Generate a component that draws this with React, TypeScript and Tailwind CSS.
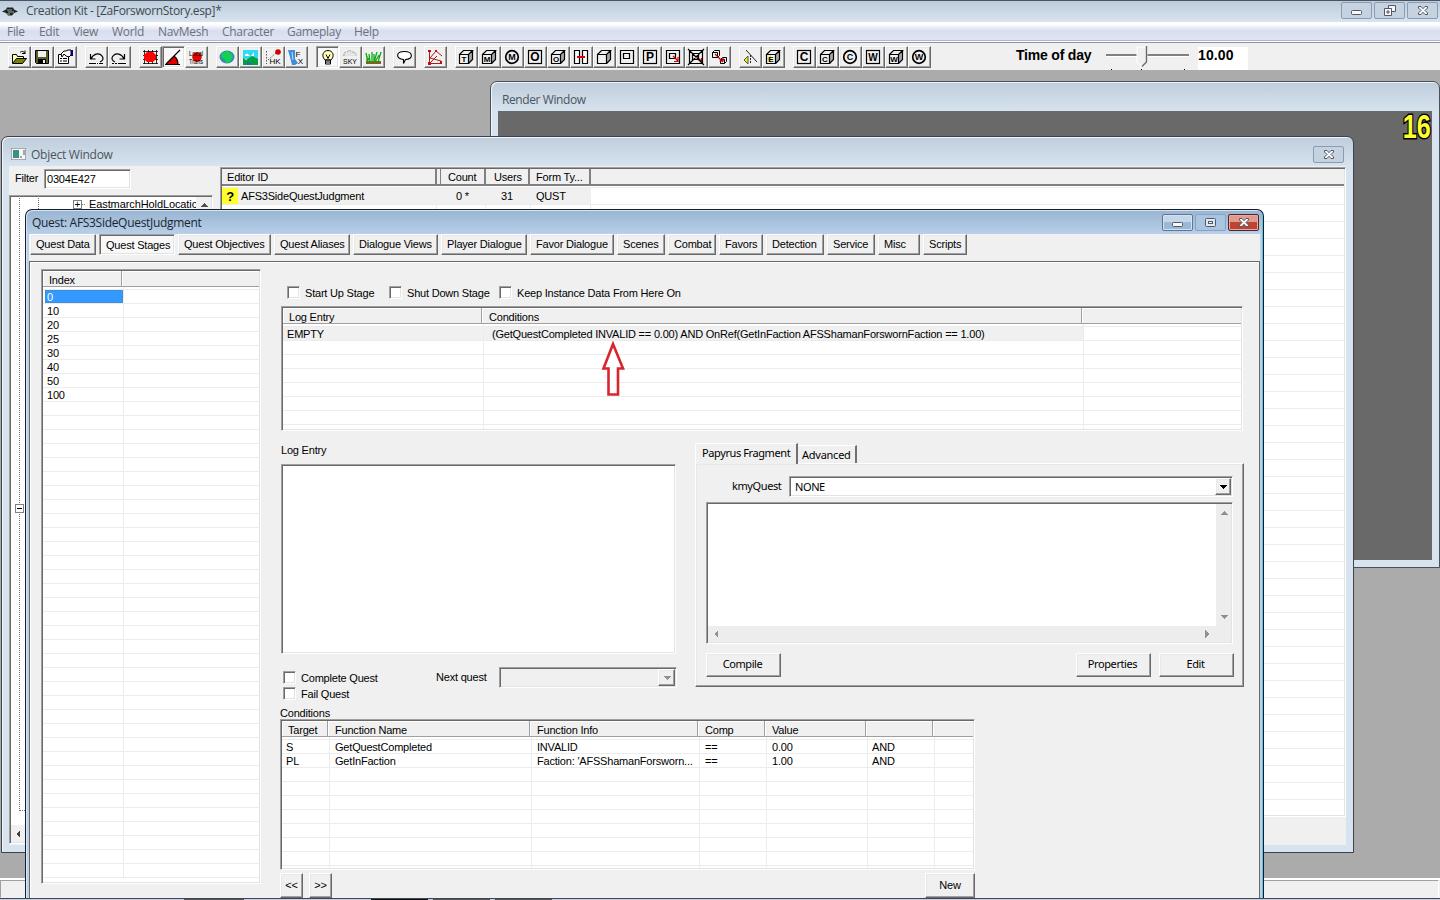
import React from 'react';
import clsx from 'clsx';

const sunken =
    'border border-t-[#a0a0a0] border-l-[#a0a0a0] border-r-white border-b-white p-px shadow-[inset_1px_1px_#696969,inset_-1px_-1px_#e3e3e3]';
const raised =
    'border border-t-white border-l-white border-r-[#696969] border-b-[#696969] bg-[#f0f0f0] shadow-[inset_-1px_-1px_#a0a0a0,inset_1px_1px_#e8e8e8]';
const segoe = 'font-["Open_Sans",sans-serif] text-[12px]';
const tahoma = 'font-["Noto_Sans",sans-serif] text-[11px] tracking-[-0.4px]';

/* ---------- toolbar icons ---------- */

function Cube({ letter }: { letter?: string }) {
    return (
        <>
            <path d="M11 5l4-4v9l-4 5z" fill="#a8a8a8" />
            <path d="M1.5 5.5h9v9h-9zM1.5 5.5l4-4h9l-4 4M14.5 1.5v9l-4 4" fill="none" stroke="#000" strokeWidth="1.2" />
            {letter && (
                <text x="6" y="13" textAnchor="middle" fontSize="8" fontWeight="bold" fontFamily="Liberation Sans" letterSpacing="0">
                    {letter}
                </text>
            )}
        </>
    );
}

function Boxed({ letter }: { letter: string }) {
    return (
        <>
            <rect x="1.5" y="1.5" width="13" height="13" fill="none" stroke="#000" strokeWidth="1.2" />
            <text x="8" y="12.2" textAnchor="middle" fontSize={letter === 'W' ? 10 : 12} fontWeight="bold" fontFamily="Liberation Sans" letterSpacing="0">
                {letter}
            </text>
        </>
    );
}

function Round({ letter }: { letter: string }) {
    return (
        <>
            <circle cx="8" cy="8" r="6.3" fill="none" stroke="#000" strokeWidth="1.7" />
            <text x="8" y="11.2" textAnchor="middle" fontSize="9" fontWeight="bold" fontFamily="Liberation Sans" letterSpacing="0">
                {letter}
            </text>
        </>
    );
}

const toolGroups: { icon: React.ReactNode; on?: boolean }[][] = [
    [
        {
            icon: (
                <>
                    <path d="M1.5 14V5.500h4l1 2h6v2" fill="#ffffb0" stroke="#000" />
                    <path d="M1.500 14.500l4-5h10l-4 5z" fill="#808000" stroke="#000" />
                    <path d="M9 3.500c2-2 4-1 5 1m0-3v3h-3" fill="none" stroke="#000" />
                </>
            ),
        },
        {
            icon: (
                <>
                    <path d="M1.5 1.5h13v13h-12l-1-1z" fill="#5c5c2c" stroke="#000" />
                    <path d="M4 2h8v6H4z" fill="#f0f0f0" />
                    <path d="M4 10h8v4H4z" fill="#000" />
                    <path d="M9 11h2v3H9z" fill="#f0f0f0" />
                </>
            ),
        },
        {
            icon: (
                <>
                    <path d="M1.5 5.5h10v9h-10z" fill="#fff" stroke="#000" />
                    <path d="M3 9.5h2m1 0h4M3 12h2m1 0h4" stroke="#000" />
                    <path d="M4 5l3-3h2l2-1h3v5l-2 2-3-1-2-2-2 3z" fill="#fff" stroke="#000" />
                    <path d="M14 1h2v6h-2z" fill="#000080" />
                </>
            ),
        },
    ],
    [
        {
            icon: (
                <path d="M2.5 5v5h5M3 10c2-5 8-7 11-3 2 2 1 5-2 6M1 14.5h7m1 0h1m1 0h4" fill="none" stroke="#000" strokeWidth="1.2" />
            ),
        },
        {
            icon: (
                <path d="M13.5 5v5h-5M13 10c-2-5-8-7-11-3-2 2-1 5 2 6M1 14.5h2m1 0h2m1 0h8" fill="none" stroke="#000" strokeWidth="1.2" />
            ),
        },
    ],
    [
        {
            icon: (
                <>
                    <path d="M2.5 1v14M6.5 1v14M10.5 1v14M14.5 1v14M1 2.5h15M1 6.5h15M1 10.5h15M1 14.5h15" stroke="#000" strokeWidth="0.8" />
                    <path d="M5 3h6l3 3v4l-3 3H5l-3-3V6z" fill="#f00" />
                </>
            ),
        },
        {
            on: true,
            icon: (
                <>
                    <path d="M1 15L9 7l3 3 1 5z" fill="#e00000" />
                    <path d="M0 15.5h15M1 15L15 1M9 7q4 3 4 8" fill="none" stroke="#000" strokeWidth="1.2" />
                </>
            ),
        },
        {
            icon: (
                <>
                    <circle cx="9" cy="8" r="4.800" fill="#e80000" />
                    <text x="1" y="7" textLength="14" lengthAdjust="spacingAndGlyphs" fontSize="7" fontFamily="Liberation Sans" letterSpacing="0">
                        Local
                    </text>
                    <text x="1" y="14.500" textLength="14" lengthAdjust="spacingAndGlyphs" fontSize="7" fontFamily="Liberation Sans" letterSpacing="0">
                        Trans
                    </text>
                </>
            ),
        },
    ],
    [
        {
            icon: (
                <>
                    <ellipse cx="8" cy="8" rx="7.500" ry="6.500" fill="#3a86b8" />
                    <path d="M3 4l5-2 4 2 2 4-3 5-4 1-1-3-4-3z" fill="#14d050" />
                </>
            ),
        },
        {
            icon: (
                <>
                    <path d="M1 1h15v9H1z" fill="#30d8f8" />
                    <path d="M3 6q2-3 4 0t5-3v4H3z" fill="#fff" />
                    <path d="M1 9l3 2 6-4 6 3v6H1z" fill="#00a040" />
                    <path d="M5 13l4 1v2H5z" fill="#3060c0" />
                </>
            ),
        },
        {
            icon: (
                <>
                    <path d="M1.5 2v13M3 11l8-7" stroke="#555" strokeDasharray="1.5 1.5" fill="none" />
                    <circle cx="13" cy="3" r="2.8" fill="#d00000" />
                    <text x="10" y="15" textAnchor="middle" fontSize="8" fontFamily="Liberation Sans" letterSpacing="0">
                        HK
                    </text>
                </>
            ),
        },
        {
            icon: (
                <>
                    <path d="M0 1h7v9l3 4-3 2H4L2 8z" fill="#3c8ce0" />
                    <path d="M4 3l1 8" stroke="#b8e0ff" />
                    <text x="10" y="8" textAnchor="middle" fontSize="8" fontFamily="Liberation Sans" letterSpacing="0">
                        F
                    </text>
                    <text x="12.500" y="14.500" textAnchor="middle" fontSize="8" fontFamily="Liberation Sans" letterSpacing="0">
                        X
                    </text>
                </>
            ),
        },
    ],
    [
        {
            on: true,
            icon: (
                <>
                    <path d="M6 11C2 7 4 1.500 9 1.500S16 7 12 11z" fill="#ffffb8" stroke="#000" />
                    <path d="M6.500 11h5v4h-5zM6.500 13h5M7 5.500l2 4 2-4" stroke="#000" fill="none" />
                </>
            ),
        },
        {
            icon: (
                <>
                    <path d="M2 7q-1-4 3-4 2-3 5 0 5 0 4 4" fill="#e4e4e4" stroke="#999" strokeDasharray="2 1" />
                    <text x="1" y="15" textLength="14" lengthAdjust="spacingAndGlyphs" fontSize="7" fontFamily="Liberation Sans" letterSpacing="0">
                        SKY
                    </text>
                </>
            ),
        },
        {
            icon: (
                <>
                    <path d="M1 12h15v3H1z" fill="#806020" />
                    <path d="M3 13L1 4m4 9L4 5m3 8V3m2 10l3-10m-2 10l4-7m-1 7l3-10M6 13L3 9m-1 3V7m7 5V5" stroke="#10a818" strokeWidth="1.300" fill="none" />
                </>
            ),
        },
    ],
    [
        {
            icon: <path d="M8.500 2.500c9 0 9 8 1 8l-2 4v-4c-8-.5-8-8 1-8z" fill="#fff" stroke="#000" strokeWidth="1.100" />,
        },
    ],
    [
        {
            icon: (
                <>
                    <path d="M2.500 2v12.500H15M3 9l6-7 6 5M3 9l11 3M3 14l7-7" fill="none" stroke="#b01818" />
                    <path d="M1 13h3v3H1zM1 1h3v2H1zM8 1h2v2H8zM13 12h2v2h-2z" fill="#b81010" />
                </>
            ),
        },
    ],
    [
        { icon: <Cube letter="T" /> },
        { icon: <Cube letter="M" /> },
        { icon: <Round letter="M" /> },
        { icon: <Boxed letter="O" /> },
        { icon: <Cube letter="O" /> },
        {
            icon: (
                <>
                    <path d="M1.500 1.500h5v13h-5zM9.500 1.500h5v13h-5z" fill="#fff" stroke="#000" strokeWidth="1.200" />
                    <path d="M4 8h8" stroke="#e00000" strokeWidth="2" />
                </>
            ),
        },
        { icon: <Cube /> },
        {
            icon: <path d="M1.500 1.500h13v13h-13zM4.500 4.500h6v5h-6z" fill="none" stroke="#000" strokeWidth="1.200" />,
        },
        { icon: <Boxed letter="P" /> },
        {
            icon: (
                <>
                    <path d="M1.500 1.500h13v13h-13zM4.500 4.500h6v5h-6z" fill="none" stroke="#000" strokeWidth="1.200" />
                    <path d="M8 7l5 5M13 8v4.500H9" stroke="#d00000" fill="none" strokeWidth="1.200" />
                </>
            ),
        },
        {
            icon: (
                <>
                    <path d="M9 8l5 5M13.500 9v4.500" stroke="#d00000" fill="none" strokeWidth="1.400" />
                    <path d="M1.500 1.500h13v13h-13zM4.500 4.500h6v6h-6zM0 0l16 16M16 0L0 16" fill="none" stroke="#000" strokeWidth="1.200" />
                </>
            ),
        },
        {
            icon: (
                <>
                    <path d="M1.500 3.500h5v5h-5zM1.500 3.500l2-2h5v5l-2 2M9.500 10.500h4v4h-4zM9.500 10.500l2-2h4v4l-2 2" fill="none" stroke="#000" />
                    <path d="M4 5l8 8M8.500 12h3.500V8.500" stroke="#d00000" fill="none" strokeWidth="1.200" />
                </>
            ),
        },
    ],
    [
        {
            icon: (
                <>
                    <path d="M2 11l4-4v8z" fill="#f0f000" stroke="#555" />
                    <path d="M4 1l11 12" stroke="#222" />
                    <path d="M8.500 6v9" stroke="#222" strokeDasharray="2 1" />
                </>
            ),
        },
        {
            icon: (
                <>
                    <path d="M2 10l4-4v8z" fill="#e8e800" />
                    <Cube letter="E" />
                </>
            ),
        },
    ],
    [
        { icon: <Boxed letter="C" /> },
        { icon: <Cube letter="C" /> },
        { icon: <Round letter="C" /> },
        { icon: <Boxed letter="W" /> },
        { icon: <Cube letter="W" /> },
        { icon: <Round letter="W" /> },
    ],
];

/* ---------- window chrome ---------- */

function CaptionButton({ kind, tone = 'idle' }: { kind: 'min' | 'max' | 'restore' | 'close'; tone?: 'idle' | 'active' | 'dim' | 'red' }) {
    return (
        <div
            className={clsx(
                'flex h-[17px] w-[31px] items-center justify-center rounded-[2px] border',
                tone === 'idle' && 'border-[#8c9bb2] bg-[#c5d3e1]',
                tone === 'active' && 'border-[#5f7591] bg-linear-to-b from-[#c4d7ea] from-50% to-[#9bb8d6] to-50% shadow-[inset_0_0_0_1px_#d5e3f1]',
                tone === 'dim' && 'border-[#88a2c0] bg-[#aac5e1]',
                tone === 'red' && 'border-[#53242a] bg-linear-to-b from-[#df9b8e] from-50% to-[#bd4432] to-50% shadow-[inset_0_0_0_1px_#e6aca1]',
            )}
        >
            <svg width="14" height="11" viewBox="0 0 14 11" fill="#f8f8f8" stroke="#535766">
                {kind === 'min' && <rect x="1.500" y="5.500" width="10" height="4" rx="1" />}
                {kind === 'max' && (
                    <>
                        <rect x="1.500" y="1.500" width="10" height="8" rx="1" fill="#dfe9f3" />
                        <rect x="4.500" y="4.500" width="4" height="2" />
                    </>
                )}
                {kind === 'restore' && (
                    <>
                        <path d="M5.500.500h7v6h-7z" />
                        <path d="M1.500 3.500h7v7h-7zM4 6h2v2H4z" />
                    </>
                )}
                {kind === 'close' && (
                    <path d="M2.500 1.500H5l2 2.200 2-2.200h2.500v1.500L9 5.500 11.500 8v1.500H9L7 7.300 5 9.500H2.500V8L5 5.500 2.500 3z" />
                )}
            </svg>
        </div>
    );
}

function Checkbox({ label, className }: { label: string; className?: string }) {
    return (
        <div className={clsx('flex h-[14px] items-start', className)}>
            <span className={clsx(sunken, 'h-[13px] w-[13px] shrink-0 bg-white')} />
            <span className="ml-[5px] whitespace-nowrap">{label}</span>
        </div>
    );
}

function Arrow({ dir, color = '#909090' }: { dir: 'up' | 'down' | 'left' | 'right'; color?: string }) {
    const d = { up: 'M0 6l4-4 4 4z', down: 'M0 2l4 4 4-4z', left: 'M6 0L2 4l4 4z', right: 'M2 0l4 4-4 4z' }[dir];
    return (
        <svg width="8" height="8" viewBox="0 0 8 8" shapeRendering="crispEdges">
            <path d={d} fill={color} />
        </svg>
    );
}

/* ---------- list view with 14px grid rows ---------- */

interface ListProps {
    className: string;
    cols: { title: string; head: string; cell: string }[];
    rows: string[][];
    count: number;
    selected?: number;
    shaded?: number;
}

function ListView({ className, cols, rows, count, selected, shaded }: ListProps) {
    return (
        <div className={clsx(sunken, 'overflow-hidden bg-white', className)}>
            <div className="flex h-full flex-col overflow-hidden">
                <div className="flex h-4 shrink-0 border-b border-[#a0a0a0] bg-[#f0f0f0]">
                    {cols.map((c, i) => (
                        <div key={i} className={clsx('shrink-0 border-r border-[#a0a0a0] pl-[7px] leading-[18px] shadow-[inset_1px_1px_#fff]', c.head)}>
                            {c.title}
                        </div>
                    ))}
                </div>
                {Array.from({ length: count + 1 }, (_, n) => (
                    <div key={n} className={clsx('flex shrink-0 border-b border-[#ececec]', n === 0 ? 'h-[3px]' : 'h-[14px]')}>
                        {cols.map((c, i) => (
                            <div
                                key={i}
                                className={clsx(
                                    'shrink-0 overflow-hidden border-r border-[#ececec] leading-[14px] whitespace-pre',
                                    c.cell,
                                    n > 0 && shaded === n - 1 && i < cols.length - 1 && 'bg-[#f0f0f0]',
                                )}
                            >
                                {n > 0 && selected === n - 1 && i === 0 ? (
                                    <div className="-ml-[2px] h-[13px] bg-[#3399ff] pl-[2px] text-white outline-1 -outline-offset-1 outline-dotted outline-[#4a83bd]">
                                        {rows[n - 1][i]}
                                    </div>
                                ) : (
                                    n > 0 && rows[n - 1]?.[i]
                                )}
                            </div>
                        ))}
                    </div>
                ))}
            </div>
        </div>
    );
}

/* ---------- windows ---------- */

function RenderWindow() {
    return (
        <div className="absolute top-[81px] left-[490px] flex h-[487px] w-[950px] flex-col rounded-t-[7px] border border-[#4b5058] bg-linear-to-b from-[#bfcddb] to-[#d7e4f0] to-[30px] px-[7px] pb-[7px] shadow-[inset_1px_1px_#eef4f9]">
            <div className={clsx(segoe, 'h-[29px] pl-[4px] leading-[36px] tracking-[-0.4px] text-[#4c545c]')}>Render Window</div>
            <div className="flex flex-1 justify-end bg-[#696969]">
                <span className="mr-[1px] h-[30px] origin-right scale-x-[0.74] font-['Liberation_Sans',sans-serif] text-[34px] leading-[30px] font-bold tracking-[0px] text-[#ffff30] [paint-order:stroke] [-webkit-text-stroke:3px_#000]">
                    16
                </span>
            </div>
        </div>
    );
}

function ObjectWindow() {
    return (
        <div className="absolute top-[136px] left-[1px] flex h-[717px] w-[1353px] flex-col rounded-t-[7px] border border-[#3c434c] bg-linear-to-b from-[#bfcddb] to-[#d7e4f0] to-[30px] pr-[7px] pb-[7px] pl-[7px] shadow-[inset_1px_1px_#eef4f9]">
            <div className="flex h-[29px] shrink-0 items-start">
                <svg className="mt-[11px] ml-[2px]" width="15" height="12" viewBox="0 0 15 12">
                    <path d="M0 0h15v12H0z" fill="#f4f6f8" stroke="#8a9299" strokeWidth="1.500" />
                    <path d="M2 2h6v8H2z" fill="#3b8f85" />
                    <path d="M9 9h2M13 2v5" stroke="#555" />
                </svg>
                <span className={clsx(segoe, 'ml-[5px] leading-[36px] tracking-[-0.25px] text-[#4c545c]')}>Object Window</span>
                <span className="mt-[9px] mr-[2px] ml-auto">
                    <CaptionButton kind="close" />
                </span>
            </div>
            <div className="flex min-h-0 flex-1 bg-[#f0f0f0]">
                <div className="flex w-[204px] shrink-0 flex-col">
                    <div className="flex h-[29px] items-start pt-[3px] pl-[6px]">
                        <span className="w-[29px] leading-[19px]">Filter</span>
                        <span className={clsx(sunken, 'h-[20px] w-[87px] bg-white pl-[2px] leading-[17px]')}>0304E427</span>
                    </div>
                    <div className={clsx(sunken, 'relative flex h-[649px] flex-col bg-white')}>
                        <div className="flex h-[15px] items-center">
                            <span className="ml-[62px] flex h-[9px] w-[9px] items-center justify-center border border-[#808080] text-[10px] tracking-normal">+</span>
                            <span className="w-[3px] border-b border-dotted border-[#808080]" />
                            <span className="ml-[4px] w-[107px] leading-[13px] tracking-[-0.1px]">EastmarchHoldLocatic</span>
                            <span className="flex h-[15px] flex-1 items-center justify-center bg-[#f0f0f0]">
                                <Arrow dir="up" color="#505050" />
                            </span>
                        </div>
                        <div className="absolute top-0 left-[9px] h-[615px] w-[10px] border-b border-l border-dotted border-[#70747c]" />
                        <div className="absolute top-0 left-[28px] h-[15px] border-l border-dotted border-[#70747c]" />
                        <div className="absolute top-[308px] left-[5px] flex h-[9px] w-[9px] items-center justify-center border border-[#808080] bg-white">
                            <span className="h-px w-[5px] bg-black" />
                        </div>
                        <div className="mt-auto flex h-[17px] items-center bg-[#f0f0f0] pl-[3px]">
                            <Arrow dir="left" color="#404040" />
                        </div>
                    </div>
                </div>
                <div className={clsx(sunken, 'mt-[1px] ml-[7px] h-[650px] w-[1126px] overflow-hidden bg-white')}>
                    <div className="flex h-[17px] border-b-2 border-[#808080] bg-[#f0f0f0] leading-[17px]">
                        <div className="w-[215px] border-r-2 border-[#808080] pl-[5px]">Editor ID</div>
                        <div className="w-[4px] border-r border-[#808080]" />
                        <div className="w-[45px] border-r-2 border-[#808080] pl-[7px]">Count</div>
                        <div className="w-[44px] border-r-2 border-[#808080] pl-[8px]">Users</div>
                        <div className="w-[61px] border-r-2 border-[#808080] pl-[6px]">Form Ty...</div>
                    </div>
                    <div className="h-[2px] border-b border-[#ececec]" />
                    <div className="flex h-[17px] border-b border-[#ececec] leading-[17px]">
                        <div className="flex w-[369px] bg-[#f0f0f0]">
                            <span className="w-[16px] bg-[#ffff30] text-center text-[13px] font-bold">?</span>
                            <span className="w-[218px] pl-[3px]">AFS3SideQuestJudgment</span>
                            <span className="w-[45px]">0 *</span>
                            <span className="w-[35px]">31</span>
                            <span>QUST</span>
                        </div>
                    </div>
                    {Array.from({ length: 35 }, (_, i) => (
                        <div key={i} className="flex h-[17px] border-b border-[#ececec]">
                            <div className="w-[215px] border-r border-[#ececec]" />
                            <div className="w-[49px] border-r border-[#ececec]" />
                            <div className="w-[45px] border-r border-[#ececec]" />
                            <div className="w-[60px] border-r border-[#ececec]" />
                        </div>
                    ))}
                </div>
            </div>
        </div>
    );
}

const questTabs = [
    { name: 'Quest Data', w: 'w-[66px]' },
    { name: 'Quest Stages', w: 'w-[76px]', on: true },
    { name: 'Quest Objectives', w: 'w-[93px]' },
    { name: 'Quest Aliases', w: 'w-[76px]' },
    { name: 'Dialogue Views', w: 'w-[85px]' },
    { name: 'Player Dialogue', w: 'w-[86px]' },
    { name: 'Favor Dialogue', w: 'w-[84px]' },
    { name: 'Scenes', w: 'w-[48px]' },
    { name: 'Combat', w: 'w-[48px]' },
    { name: 'Favors', w: 'w-[44px]' },
    { name: 'Detection', w: 'w-[58px]' },
    { name: 'Service', w: 'w-[48px]' },
    { name: 'Misc', w: 'w-[42px]' },
    { name: 'Scripts', w: 'w-[44px]' },
];

function PapyrusPanel() {
    return (
        <div className={clsx(tahoma, 'mt-[12px] ml-[18px] flex h-[244px] w-[549px] flex-col')}>
            <div className="flex h-[20px] items-end">
                <div className="z-10 -mb-px h-[21px] w-[103px] border-t border-r-2 border-l border-t-white border-r-[#707070] border-l-white bg-[#f0f0f0] pl-[6px] leading-[18px]">
                    Papyrus Fragment
                </div>
                <div className="h-[18px] w-[59px] border-t border-r-2 border-t-white border-r-[#707070] pl-[4px] leading-[18px] tracking-[-0.25px]">
                    Advanced
                </div>
            </div>
            <div className={clsx(raised, 'flex h-[224px] flex-col pt-[12px] pl-[10px]')}>
                <div className="flex h-[21px]">
                    <span className="w-[83px] pl-[26px] leading-[20px]">kmyQuest</span>
                    <div className={clsx(sunken, 'flex w-[444px] bg-white')}>
                        <span className="flex-1 pl-[4px] leading-[18px]">NONE</span>
                        <span className={clsx(raised, 'flex w-[16px] items-center justify-center')}>
                            <Arrow dir="down" color="#000" />
                        </span>
                    </div>
                </div>
                <div className={clsx(sunken, 'mt-[5px] flex h-[142px] w-[527px] flex-col bg-white')}>
                    <div className="flex flex-1">
                        <div className="flex-1" />
                        <div className="flex w-[15px] flex-col items-center justify-between bg-[#ededed] py-[5px]">
                            <Arrow dir="up" />
                            <Arrow dir="down" />
                        </div>
                    </div>
                    <div className="flex h-[16px] items-center justify-between bg-[#ededed] pr-[20px] pl-[4px]">
                        <Arrow dir="left" />
                        <Arrow dir="right" />
                    </div>
                </div>
                <div className="mt-[9px] flex text-center leading-[20px]">
                    <div className={clsx(raised, 'h-[24px] w-[75px] pr-[2px]')}>Compile</div>
                    <div className={clsx(raised, 'ml-[295px] h-[24px] w-[75px] pr-[2px]')}>Properties</div>
                    <div className={clsx(raised, 'ml-[8px] h-[24px] w-[75px] pr-[2px]')}>Edit</div>
                </div>
            </div>
        </div>
    );
}

function QuestWindow() {
    return (
        <div className="absolute top-[209px] left-[25px] flex h-[690px] w-[1239px] flex-col rounded-t-[7px] border border-b-0 border-[#15202a] bg-linear-to-b from-[#99b4d1] to-[#b9d1ea] to-[25px] px-[3px] shadow-[inset_1px_1px_#d4e4f2,inset_-1px_0_#5cc3dc]">
            <div className="flex h-[24px] shrink-0 items-start">
                <span className={clsx(segoe, 'pl-[3px] leading-[26px] tracking-[-0.3px] text-[#1b2530]')}>Quest: AFS3SideQuestJudgment</span>
                <div className="mt-[4px] mr-px ml-auto flex gap-[2px]">
                    <CaptionButton kind="min" tone="active" />
                    <CaptionButton kind="max" tone="dim" />
                    <CaptionButton kind="close" tone="red" />
                </div>
            </div>
            <div className="flex min-h-0 flex-1 flex-col bg-[#f0f0f0]">
                <div className="flex h-[27px] shrink-0 gap-[3px] pl-px">
                    {questTabs.map((t) => (
                        <div
                            key={t.name}
                            className={clsx(
                                'h-[21px] shrink-0 whitespace-nowrap',
                                t.w,
                                t.on ? clsx(sunken, 'bg-[#f8f8f8] pt-[2px] !pl-[6px] leading-[17px]') : clsx(raised, 'pl-[5px] leading-[18px]'),
                            )}
                        >
                            {t.name}
                        </div>
                    ))}
                </div>
                <div className="flex min-h-0 flex-1 border-t border-r border-l border-[#696969] shadow-[inset_1px_1px_#fff]">
                    <ListView
                        className="mt-[7px] ml-[11px] h-[615px] w-[220px] shrink-0"
                        cols={[
                            { title: 'Index', head: 'w-[79px] !pl-[6px]', cell: 'w-[81px] pl-[4px]' },
                            { title: '', head: 'w-[140px]', cell: 'w-[140px]' },
                        ]}
                        rows={[['0'], ['10'], ['20'], ['25'], ['30'], ['40'], ['50'], ['100']]}
                        count={42}
                        selected={0}
                    />
                    <div className="ml-[20px] flex flex-1 flex-col">
                        <div className="mt-[24px] flex h-[14px] pl-[6px]">
                            <Checkbox label="Start Up Stage" className="w-[102px]" />
                            <Checkbox label="Shut Down Stage" className="w-[110px]" />
                            <Checkbox label="Keep Instance Data From Here On" />
                        </div>
                        <div className="relative mt-[6px] flex h-[125px]">
                            <ListView
                                className="h-[125px] w-[962px]"
                                cols={[
                                    { title: 'Log Entry', head: 'w-[199px] !pl-[6px]', cell: 'w-[201px] pl-[4px]' },
                                    { title: 'Conditions', head: 'w-[600px]', cell: 'w-[600px] pl-[8px]' },
                                    { title: '', head: 'w-[160px] border-r-0', cell: 'w-[160px]' },
                                ]}
                                rows={[
                                    ['EMPTY', '(GetQuestCompleted INVALID == 0.00) AND OnRef(GetInFaction AFSShamanForswornFaction == 1.00)'],
                                ]}
                                count={8}
                                shaded={0}
                            />
                            {/* pointer at the INVALID function */}
                            <svg className="absolute top-[34px] left-[320px]" width="24" height="58" viewBox="0 0 24 58">
                                <path d="M12 4L2.500 28.500h5V54.500h9.500V28.500h5z" fill="#fff" stroke="#d7262e" strokeWidth="2.600" />
                            </svg>
                        </div>
                        <div className="flex h-[256px]">
                            <div className="flex w-[396px] shrink-0 flex-col">
                                <div className="mt-[12px] h-[21px] shrink-0 leading-[14px]">Log Entry</div>
                                <div className={clsx(sunken, 'h-[190px] w-[395px] shrink-0 bg-white')} />
                                <div className="mt-[13px] flex">
                                    <div className="w-[155px] pt-[4px] pl-[2px]">
                                        <Checkbox label="Complete Quest" />
                                        <Checkbox label="Fail Quest" className="mt-[2px]" />
                                    </div>
                                    <span className="w-[63px] leading-[20px]">Next quest</span>
                                    <div className={clsx(sunken, 'flex h-[21px] w-[178px] justify-end')}>
                                        <span className={clsx(raised, 'flex w-[17px] items-center justify-center')}>
                                            <Arrow dir="down" />
                                        </span>
                                    </div>
                                </div>
                            </div>
                            <PapyrusPanel />
                        </div>
                        <div className="mt-[19px] -ml-px h-[13px] leading-[15px]">Conditions</div>
                        <ListView
                            className="-ml-px h-[151px] w-[695px]"
                            cols={[
                                { title: 'Target', head: 'w-[46px] !pl-[6px]', cell: 'w-[48px] pl-[4px]' },
                                { title: 'Function Name', head: 'w-[202px]', cell: 'w-[202px] pl-[5px]' },
                                { title: 'Function Info', head: 'w-[168px]', cell: 'w-[168px] pl-[5px]' },
                                { title: 'Comp', head: 'w-[67px]', cell: 'w-[67px] pl-[5px]' },
                                { title: 'Value', head: 'w-[101px]', cell: 'w-[101px] pl-[5px]' },
                                { title: '', head: 'w-[67px]', cell: 'w-[67px] pl-[4px]' },
                                { title: '', head: 'w-[41px] border-r-0', cell: 'w-[41px]' },
                            ]}
                            rows={[
                                ['S', 'GetQuestCompleted', 'INVALID', '==', '0.00', 'AND'],
                                ['PL', 'GetInFaction', "Faction: 'AFSShamanForsworn...", '==', '1.00', 'AND'],
                            ]}
                            count={10}
                        />
                        <div className="mt-[3px] -ml-px flex text-center leading-[22px]">
                            <div className={clsx(raised, 'h-[25px] w-[23px]')}>&lt;&lt;</div>
                            <div className={clsx(raised, 'ml-[6px] h-[25px] w-[23px]')}>&gt;&gt;</div>
                            <div className={clsx(raised, 'ml-[593px] h-[25px] w-[50px]')}>New</div>
                        </div>
                    </div>
                </div>
            </div>
        </div>
    );
}

export default function App() {
    return (
        <div className="relative flex h-[900px] w-[1440px] flex-col overflow-hidden bg-[#ababab] font-['Liberation_Sans',Arial,sans-serif] text-[11px] leading-[14px] tracking-[-0.2px] text-black">
            {/* Title bar */}
            <div className="flex h-[22px] shrink-0 items-start border-t border-[#4a5361] bg-linear-to-b from-[#bdccdb] to-[#d8e4ef] pl-[2px]">
                <svg className="mt-[5px]" width="16" height="11" viewBox="0 0 16 11">
                    <path d="M0 5.500l4-2 1-2h6l1 2 4 2-4 1.500-2 2.500H6L4 7z" fill="#222" />
                    <path d="M5 4h5M6 6h6M5 8h3" stroke="#9aa" />
                </svg>
                <span className={clsx(segoe, 'ml-[8px] leading-[20px] tracking-[-0.35px] text-[#3e4850]')}>Creation Kit - [ZaForswornStory.esp]*</span>
                <div className="mt-px mr-[2px] ml-auto flex gap-[2px]">
                    <CaptionButton kind="min" />
                    <CaptionButton kind="restore" />
                    <CaptionButton kind="close" />
                </div>
            </div>
            {/* Menu */}
            <div className={clsx(segoe, 'flex h-[21px] shrink-0 border-b border-[#8f93a5] bg-linear-to-b from-white from-10% via-[#d8def0] via-45% to-[#e2e5f6] pl-[7px] leading-[19px] tracking-[-0.3px] text-[#6d7178] shadow-[inset_0_-1px_#fff,inset_0_-2px_#b4b7c6]')}>
                <span className="w-[32px]">File</span>
                <span className="w-[34px]">Edit</span>
                <span className="w-[39px]">View</span>
                <span className="w-[46px]">World</span>
                <span className="w-[64px]">NavMesh</span>
                <span className="w-[65px]">Character</span>
                <span className="w-[67px]">Gameplay</span>
                <span>Help</span>
            </div>
            {/* Toolbar */}
            <div className="flex h-[27px] shrink-0 bg-[#f0f0f0] pl-[8px]">
                <div className="flex gap-[8px] pt-[3px]">
                    {toolGroups.map((group, g) => (
                        <div key={g} className="flex">
                            {group.map((t, i) => (
                                <div key={i} className={clsx('h-[22px] w-[23px]', t.on ? clsx(sunken, '!p-0 bg-[#f8f8f8]') : raised)}>
                                    <svg className="mt-[2px] ml-[2px] overflow-visible" width="16" height="16" viewBox="0 0 16 16">
                                        {t.icon}
                                    </svg>
                                </div>
                            ))}
                        </div>
                    ))}
                </div>
                <span className="ml-[85px] w-[90px] text-[14px] leading-[25px] font-bold">Time of day</span>
                <svg width="84" height="27" viewBox="0 0 84 27">
                    <path d="M0 12h83" stroke="#808080" strokeWidth="2" />
                    <path d="M0 13.500h83" stroke="#fff" />
                    <path d="M31 4h10v15l-5 4.500-5-4.500z" fill="#f0f0f0" stroke="#fff" />
                    <path d="M40.500 3v16l-4.500 4.500" fill="none" stroke="#696969" strokeWidth="1.400" />
                    <path d="M5.500 26v1M35.500 26v1M78.500 26v1" stroke="#000" />
                </svg>
                <div className="mt-[4px] ml-[8px] w-[50px] bg-white text-[14px] leading-[17px] font-bold tracking-[0.1px]">10.00</div>
            </div>
            {/* Workspace */}
            <div className="flex-1" />
            <RenderWindow />
            <ObjectWindow />
            <div className="flex h-[20px] shrink-0 border-t-2 border-white bg-[#f0f0f0] pr-[1px]">
                <div className="flex-1 border border-t-[#a0a0a0] border-r-white border-b-[#f0f0f0] border-l-[#a0a0a0]" />
            </div>
            <div className="h-[2px] shrink-0" />
            <QuestWindow />
            {/* Taskbar edge */}
            <div className="absolute bottom-0 left-0 flex h-[2px] w-full border-t border-[#3f4658] bg-[#c5cfdd] pl-[184px]">
                <span className="w-[60px] bg-[#555]" />
                <span className="ml-[127px] w-[57px] bg-[#111]" />
                <span className="ml-[5px] w-[57px] bg-[#555]" />
                <span className="ml-[5px] w-[57px] bg-[#555]" />
            </div>
        </div>
    );
}
